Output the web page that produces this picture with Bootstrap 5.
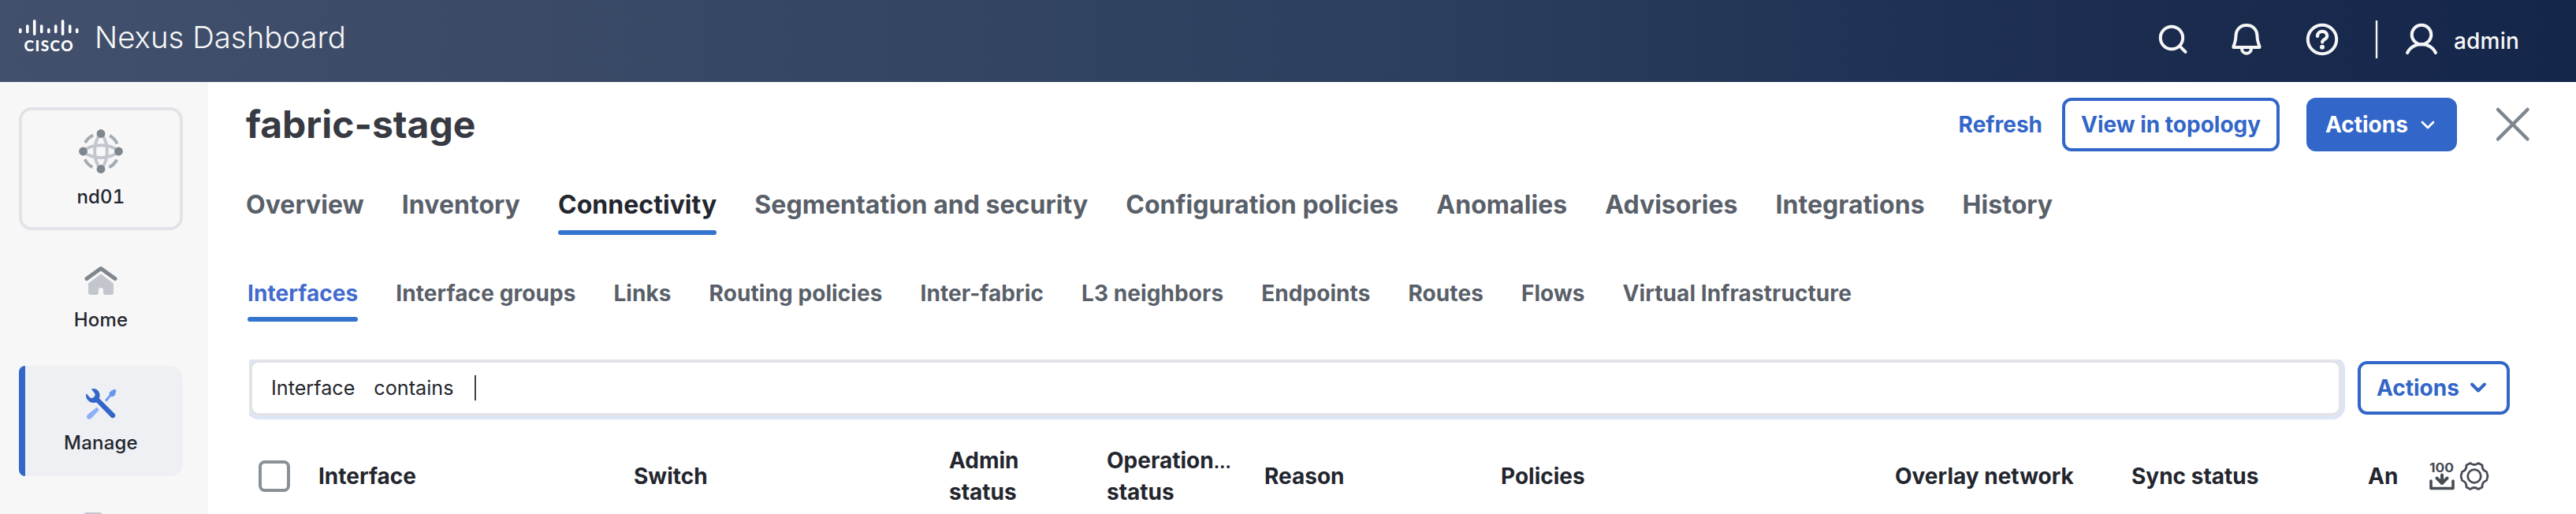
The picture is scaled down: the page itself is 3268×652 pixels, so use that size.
<!DOCTYPE html>
<html lang="en">
<head>
<meta charset="utf-8">
<title>Nexus Dashboard</title>
<link rel="stylesheet" href="https://cdn.jsdelivr.net/npm/bootstrap@5.3.0/dist/css/bootstrap.min.css">
<style>
body{font-family:Inter,"Liberation Sans",sans-serif;color:#23262e;width:3268px;height:652px;overflow:hidden;background:#fff}
svg{display:block;flex:none;overflow:visible}
.topbar{height:104px;background:linear-gradient(90deg,#42506c 0%,#3a4a67 20%,#2b3f5e 55%,#1a2b4e 85%,#14264a 100%);color:#f7f7f7;padding:0 72px 0 22px}
.product{font-size:38.4px;font-weight:300;line-height:48px;margin:-10px 0 0 18px}
.admin-name{font-size:28px;font-weight:500;line-height:40px;letter-spacing:.2px}
.side{width:264px;height:548px;background:#f7f7f7;padding:32px 32px 0 24px;gap:16px;overflow:hidden}
.side-item{width:208px;height:140px;flex:none;padding-top:29px;gap:13px;font-size:24px;font-weight:500;line-height:32px;letter-spacing:.2px;border-radius:8px 16px 16px 8px;font-variant-numeric:tabular-nums}
.side-item.cluster{height:156px;border:4px solid #e1e3e8;border-radius:16px;padding-top:24px;gap:14px}
.side-item.current{background:linear-gradient(90deg,#3266c8 8px,#eff0f3 8px)}
.page{padding:20px 0 0 48px}
.page h1{font-size:48px;font-weight:700;line-height:60px;color:#373a42}
.btn{font-size:28px;font-weight:700;line-height:40px;border-radius:12px;border-width:4px;height:68px;padding:0 20px;--bs-btn-color:#3266c8;--bs-btn-border-color:#3266c8}
.btn-primary{--bs-btn-bg:#3266c8;--bs-btn-color:#fff}
.refresh{font-size:28px;font-weight:700;color:#3266c8}
.tabs{gap:48px;white-space:nowrap;font-weight:700;color:#596069}
.tabs span{position:relative;padding-bottom:18px}
.tabs .on::after{content:"";position:absolute;left:0;right:0;bottom:0;height:6px;border-radius:3px;background:#3374cf}
.tabs-a{font-size:32px;line-height:40px;letter-spacing:.035px;margin-top:48px;height:58px}
.tabs-a .on{color:#23262e}
.tabs-b{font-size:28px;line-height:36px;letter-spacing:.075px;margin:56px 0 0 2px;height:54px}
.tabs-b .on{color:#426bce}
.filter-clip{width:2659px;height:76px;overflow:hidden}
.filter{width:2655px;height:72px;border:4px solid #e1e3e8;border-radius:12px;box-shadow:0 0 0 4px #dce4f7;padding-left:24px;font-size:25.2px;line-height:36px;gap:24px}
.caret-bar{width:2px;height:32px;background:#3f424a;margin-left:2px}
.thead-row{margin:32px 0 0 16px;height:80px;font-size:28px;font-weight:700;line-height:40px}
.ellip{font-size:22px;line-height:1}
.check{width:40px;height:40px;border:4px solid #889098;border-radius:8px;margin-right:36px;flex:none}
.w2{width:200px}.w3{width:300px}.w4{width:400px}.w5{width:500px}
.w2,.w3,.w4,.w5{flex:none}
</style>
</head>
<body>
<header class="topbar d-flex align-items-center">
  <svg width="80" height="46" viewBox="22 22 80 46" style="margin-top:-14px">
    <g stroke="#fff" stroke-width="3.6" stroke-linecap="round"><path d="M25.7 37.6v2.8M34.8 33v7.4M43.7 26.8v16.4M52.7 33v7.4M61.8 37.6v2.8M70.7 33v7.4M79.6 26.8v16.4M88.7 33v7.4M97.7 37.6v2.8"/></g>
    <text x="30.6" y="64.5" textLength="62" font-family="Lato" font-weight="900" font-size="19" fill="#fff">CISCO</text>
  </svg>
  <div class="product">Nexus Dashboard</div>
  <div class="ms-auto d-flex align-items-center">
    <svg width="400" height="70" viewBox="0 0 400 70" fill="none" stroke="#f7f7f7" stroke-width="4" stroke-linecap="round" stroke-linejoin="round" style="margin:-4px -6px 0 0">
      <circle cx="36" cy="33" r="14.2"/><path d="M46.4 43.6l7.2 7.2"/>
      <path d="M131 17c-8 0-13.5 5.600-13.500 14 0 6-1.500 8.500-3 13v1h33v-1c-1.500-4.500-3-7-3-13 0-8.400-5.500-14-13.500-14z"/><path d="M125 46.500c0 3.500 2.500 6.200 6 6.200s6-2.700 6-6.200"/>
      <circle cx="227" cy="35" r="18.200"/><path d="M221 31c0-4 2.600-6.200 6.200-6.200s6 2.300 6 5.600c0 4.600-6 4.600-6 8" stroke-width="4.200"/><circle cx="227" cy="44.800" r="3" fill="#f7f7f7" stroke="none"/>
      <path d="M296 11v48" stroke-width="2.400" stroke-linecap="butt"/>
      <circle cx="353" cy="29" r="12.300"/><path d="M335 52c3.500-7 10-10.800 18-10.800s14.500 3.800 18 10.800"/>
    </svg>
    <span class="admin-name">admin</span>
  </div>
</header>
<div class="d-flex">
  <nav class="side d-flex flex-column">
    <div class="side-item cluster d-flex flex-column align-items-center">
      <svg width="56" height="56" viewBox="0 0 56 56" fill="none">
        <circle cx="28" cy="28" r="22.800" stroke="#a5abb2" stroke-width="4" stroke-dasharray="14 21.814" stroke-dashoffset="-10.900"/>
        <g stroke="#c3c6ce" stroke-width="4"><path d="M28 5c-10.500 12-10.500 34 0 46M28 5c10.500 12 10.500 34 0 46M5 28c12-10.500 34-10.500 46 0M5 28c12 10.500 34 10.500 46 0"/></g>
        <g fill="#7e868e"><circle cx="28" cy="5.500" r="5.400"/><circle cx="28" cy="50.500" r="5.400"/><circle cx="5.500" cy="28" r="5.400"/><circle cx="50.500" cy="28" r="5.400"/></g>
      </svg>
      nd01
    </div>
    <div class="side-item d-flex flex-column align-items-center">
      <svg width="42" height="40" viewBox="0 0 42 40" fill="none"><path d="M3 16.500L21 3.500l18 13" stroke="#7e868e" stroke-width="5" stroke-linecap="round" stroke-linejoin="round"/><path d="M5 22.500L21 10.500l16 12V34q0 3-3 3H27q-3 0-3-3v-3.500q0-2.500-3-2.500t-3 2.500V34q0 3-3 3H8q-3 0-3-3z" fill="#c3c6ce"/></svg>
      Home
    </div>
    <div class="side-item current d-flex flex-column align-items-center">
      <svg width="40" height="40" viewBox="0 0 40 40"><path d="M14.800 23.600L3.400 32.800c-2.400 2.400-1.300 6 2 6q1.500 0 2.600-1.200L17.800 27z" fill="#8cb0f5"/><path d="M25 14.400l5.700-6.500c-.6-2.300.3-3.600 2-4.900l4.800-2.400 2 2-1.600 5.200c-1.600 2.300-3.300 2.800-5.500 2.300L27.200 16.500z" fill="#6698ef"/><path d="M8 .400c5-1.500 10.600 2.300 10.600 7.800 0 1.600-.3 2.800-.8 4L37.600 32c2.300 2.600-1.200 7.200-4.600 4.500L14.200 17.200c-5 2.300-12-1-13-7.200Q.8 7.600 1.600 6.200L6 11.200q2 1.500 4.600-.2 3-1.800 1.600-5z" fill="#3266c8"/></svg>
      Manage
    </div>
    <div class="side-item d-flex flex-column align-items-center">
      <svg width="44" height="40" viewBox="0 0 44 40"><rect y="1" width="24" height="36" rx="4" fill="#c3c6ce"/></svg>
    </div>
  </nav>
  <main class="page flex-grow-1">
    <div class="d-flex align-items-center">
      <h1 class="m-0">fabric-stage</h1>
      <div class="ms-auto d-flex align-items-center" style="margin-right:56px">
        <span class="refresh" style="margin-right:25px">Refresh</span>
        <button class="btn btn-outline-primary text-nowrap" style="width:276px;margin-right:34px">View in topology</button>
        <button class="btn btn-primary d-flex align-items-center" style="width:191px;margin-right:47px">Actions<svg class="ms-auto" width="24" height="20" viewBox="0 0 24 20" fill="none" stroke="#fff" stroke-width="2.800" stroke-linecap="round" stroke-linejoin="round"><path d="M4 7l7 7 7-7"/></svg></button>
        <svg width="48" height="48" viewBox="0 0 48 48" stroke="#7e868e" stroke-width="4.500" stroke-linecap="round"><path d="M5 5l37.500 37.500M42.500 5L5 42.500"/></svg>
      </div>
    </div>
    <div class="tabs tabs-a d-flex"><span>Overview</span><span>Inventory</span><span class="on">Connectivity</span><span>Segmentation and security</span><span>Configuration policies</span><span>Anomalies</span><span>Advisories</span><span>Integrations</span><span>History</span></div>
    <div class="tabs tabs-b d-flex"><span class="on">Interfaces</span><span>Interface groups</span><span>Links</span><span>Routing policies</span><span>Inter-fabric</span><span>L3 neighbors</span><span>Endpoints</span><span>Routes</span><span>Flows</span><span>Virtual Infrastructure</span></div>
    <div class="d-flex align-items-start" style="margin:48px 0 0 4px">
      <div class="filter-clip"><div class="filter d-flex align-items-center"><span>Interface</span><span>contains</span><span class="caret-bar"></span></div></div>
      <button class="btn btn-outline-primary d-flex align-items-center" style="width:193px;margin:2px 0 0 16px">Actions<svg class="ms-auto" width="32" height="24" viewBox="0 0 32 24" fill="none" stroke="#3266c8" stroke-width="4" stroke-linecap="round" stroke-linejoin="round"><path d="M8 7.500l8 8 8-8"/></svg></button>
    </div>
    <div class="thead-row d-flex align-items-center">
      <span class="check"></span>
      <span class="w4">Interface</span><span class="w4">Switch</span><span class="w2">Admin<br>status</span><span class="w2">Operation<span class="ellip">…</span><br>status</span><span class="w3">Reason</span><span class="w5">Policies</span><span class="w3">Overlay network</span><span class="w3">Sync status</span><span style="width:77px">An</span>
      <svg width="34" height="36" viewBox="0 0 34 36"><text x="1" y="13" textLength="31" lengthAdjust="spacingAndGlyphs" font-size="16.500" font-weight="700" fill="#464b54">100</text><g fill="none" stroke="#464b54" stroke-linecap="round" stroke-linejoin="round"><path d="M17 16.500v9M10.500 20.500l6.500 6.500 6.500-6.500" stroke-width="4"/><path d="M3 24v9.500h28V24" stroke-width="3.600"/></g></svg>
      <svg width="38" height="38" viewBox="0 0 38 38" fill="none" stroke="#464b54" stroke-width="2.800" stroke-linejoin="round" style="margin-left:5px"><circle cx="19" cy="19" r="8.300"/><path d="M14 2.500Q19 6.500 24 2.500L29 5Q28.500 11.500 34.500 13.500L36 19L34.500 24.500Q28.500 26.500 29 33L24 35.500Q19 31.500 14 35.500L9 33Q9.500 26.500 3.500 24.500L2 19L3.500 13.500Q9.500 11.500 9 5Z"/></svg>
    </div>
  </main>
</div>
<script src="https://cdn.jsdelivr.net/npm/bootstrap@5.3.0/dist/js/bootstrap.bundle.min.js"></script>
</body>
</html>
